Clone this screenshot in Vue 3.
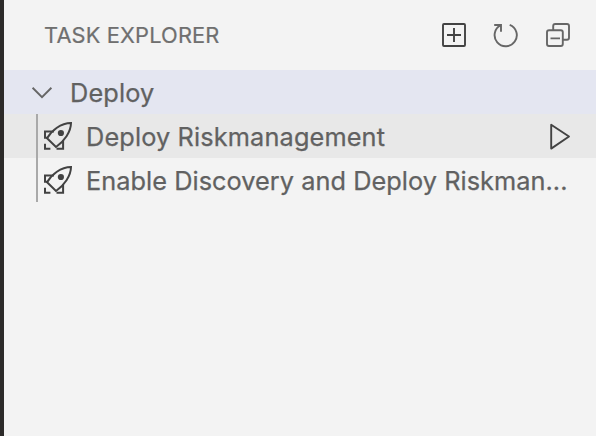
<script setup>
const tasks = [
  { label: 'Deploy Riskmanagement', active: true },
  { label: 'Enable Discovery and Deploy Riskman...', active: false },
]
</script>

<template>
  <main class="panel">
    <header class="header">
      <h1 class="title">TASK EXPLORER</h1>
      <div class="actions">
        <svg class="icon" viewBox="0 0 28 28"><rect class="dark" x="3" y="3" width="22" height="22" rx="1" /><path class="dark" d="M14 7v14M7 14h14" /></svg>
        <svg class="icon" viewBox="0 0 28 28"><path d="M2.2 4H9v6.8M8.8 4.2A11.1 11.1 0 1 0 17.7 3.8" /></svg>
        <svg class="icon" viewBox="0 0 28 28"><rect x="3" y="9.2" width="15.8" height="15.8" rx="2" /><path d="M9.2 9V5a2 2 0 0 1 2-2H23a2 2 0 0 1 2 2v11.7a2 2 0 0 1-2 2h-4M6.5 17.4h9.5" /></svg>
      </div>
    </header>
    <section class="tree">
      <div class="group">
        <svg class="chevron" viewBox="0 0 24 16"><path d="M2.6 3.8l9.4 9.3L21.4 3.8" /></svg>
        <span class="name">Deploy</span>
      </div>
      <ul class="tasks">
        <li v-for="task in tasks" :key="task.label" class="task" :class="{ active: task.active }">
          <svg class="rocket" viewBox="0 0 30 30">
            <path d="M4.1 17.3C8.5 9.4 17.8 2.1 28 2 27.9 11 21.2 20.3 13 26Z" />
            <path d="M11 10.5H2v6.3h3M13.5 27.8H20.1V19M2 22.8v5h5.4" />
            <circle cx="17.9" cy="12" r="3.1" />
          </svg>
          <span class="label">{{ task.label }}</span>
          <svg v-if="task.active" class="run" viewBox="0 0 24 28"><path d="M3.2 2.8v23.8L21 14.5Z" /></svg>
        </li>
      </ul>
    </section>
  </main>
</template>

<style>
body { margin: 0; background: #f3f3f3; }
</style>

<style scoped>
.panel {
  box-sizing: border-box;
  height: 436px;
  border-left: 4px solid #2c2a29;
  background: #f3f3f3;
  color: #616161;
  font-family: Inter, "Liberation Sans", sans-serif;
  overflow: hidden;
}
.header {
  box-sizing: border-box;
  height: 70px;
  padding: 0 24px 0 40px;
  display: flex;
  align-items: center;
  justify-content: space-between;
}
.title {
  margin: 0;
  color: #6f6f6f;
  font-size: 21.8px;
  font-weight: 400;
  letter-spacing: 0.16px;
  white-space: nowrap;
  -webkit-text-stroke: 0.2px;
}
.actions { display: flex; gap: 24px; }
svg { display: block; flex: none; fill: none; }
.icon { width: 28px; height: 28px; stroke: #666; stroke-width: 1.9; }
.icon .dark { stroke: #424242; }
.group {
  display: flex;
  align-items: center;
  height: 44px;
  padding-left: 26px;
  background: #e4e6f1;
  font-size: 25.3px;
}
.chevron { width: 24px; height: 16px; margin-right: 16px; stroke: #666; stroke-width: 1.9; }
.name, .label {
  height: 44px;
  line-height: 46px;
  letter-spacing: 0.14px;
  white-space: nowrap;
  -webkit-text-stroke: 0.25px;
}
.tasks { margin: 0; padding: 0; list-style: none; }
.task {
  display: flex;
  align-items: center;
  height: 44px;
  padding-right: 24px;
  font-size: 25.3px;
}
.task::before { content: ""; width: 2px; height: 44px; margin-left: 32px; background: #a9a9a9; }
.active { background: #e8e8e8; }
.rocket { width: 30px; height: 30px; margin: 0 13px 0 5px; stroke: #424242; stroke-width: 2; }
.rocket circle { fill: #424242; stroke: none; }
.label { flex: 1; min-width: 0; }
.task:not(.active) .label { letter-spacing: 0.05px; }
.run { width: 24px; height: 28px; stroke: #424242; stroke-width: 1.9; stroke-linejoin: round; }
</style>
